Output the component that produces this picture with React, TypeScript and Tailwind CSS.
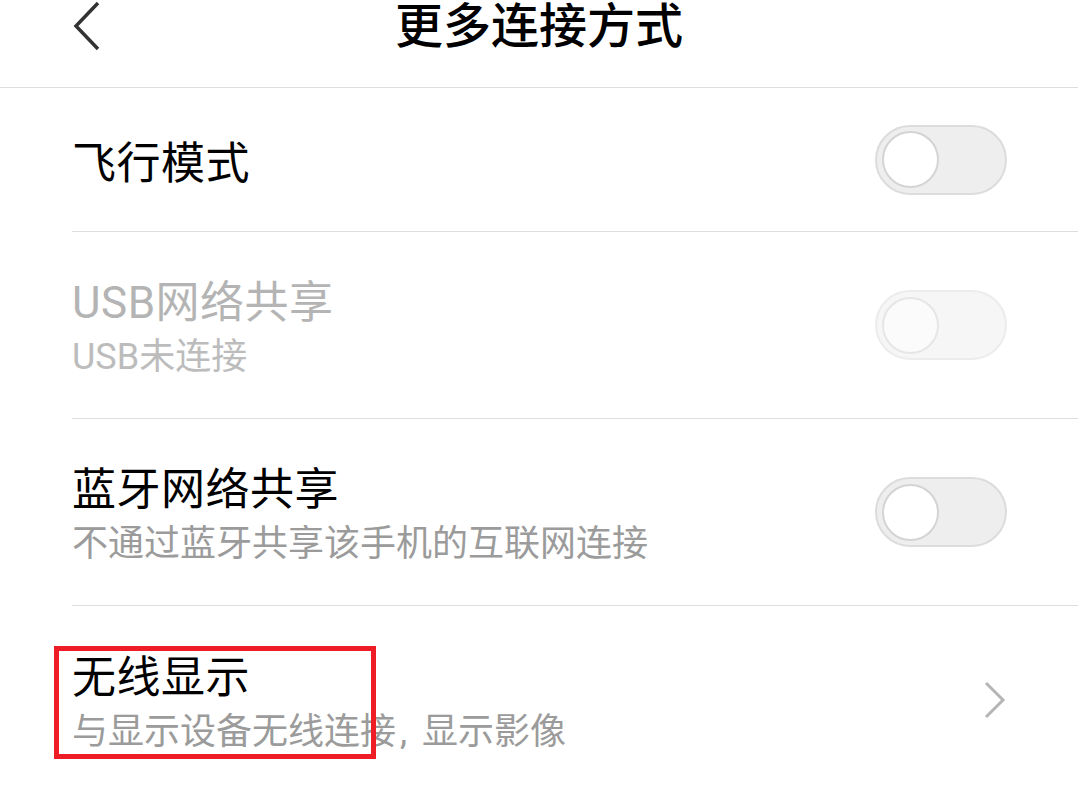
import React from 'react';

const FONT = { fontFamily: 'Roboto, "Noto Sans CJK SC", "Noto Sans", sans-serif' };

function Toggle({ disabled }: { disabled?: boolean }) {
  return (
    <div
      className={
        'flex h-[70px] w-[132px] items-center rounded-full border-2 px-[5px] ' +
        (disabled ? 'border-[#ececec] bg-[#f6f6f6]' : 'border-[#dcdcdc] bg-[#eeeeee]')
      }
    >
      <div
        className={
          'h-[57px] w-[57px] rounded-full border-2 ' +
          (disabled ? 'border-[#e6e6e6] bg-[#fbfbfb]' : 'border-[#d4d4d4] bg-white')
        }
      />
    </div>
  );
}

function Chevron() {
  return (
    <svg width="24" height="40" viewBox="0 0 24 40" fill="none">
      <path d="M3 3 L20 20 L3 37" stroke="#b5b5b5" strokeWidth="3" />
    </svg>
  );
}

interface RowProps {
  title: string;
  subtitle?: React.ReactNode;
  disabled?: boolean;
  right: React.ReactNode;
  last?: boolean;
  children?: React.ReactNode;
}

function Row({ title, subtitle, disabled, right, last, children }: RowProps) {
  return (
    <div className="relative pl-[72px]">
      <div
        className={
          'flex items-center justify-between pr-[71px] ' +
          (subtitle ? 'h-[187px] ' : 'h-[144px] ') +
          (last ? '' : 'border-b border-[#dedede]')
        }
      >
        <div className="flex flex-col pt-[8px]">
          <div
            className={
              'text-[44px] leading-[56px] tracking-[0.5px] ' +
              (disabled ? 'text-[#b4b4b4]' : 'text-black')
            }
          >
            {title}
          </div>
          {subtitle && (
            <div
              className={
                'text-[36px] leading-[52px] ' + (disabled ? 'text-[#bcbcbc]' : 'text-[#9b9b9b]')
              }
            >
              {subtitle}
            </div>
          )}
        </div>
        <div className="flex items-center">{right}</div>
      </div>
      {children}
    </div>
  );
}

export default function App() {
  return (
    <div className="h-[789px] w-[1078px] overflow-hidden bg-white" style={FONT}>
      {/* Header */}
      <div className="relative flex h-[88px] items-center justify-center border-b border-[#dedede]">
        <div className="absolute left-[72px] top-0">
          <svg width="30" height="52" viewBox="0 0 30 52" fill="none">
            <path d="M26 3 L4 26 L26 49" stroke="#333333" strokeWidth="3.5" />
          </svg>
        </div>
        <div className="-mt-[34px] text-[48px] font-medium leading-[56px] text-black">更多连接方式</div>
      </div>

      <Row title="飞行模式" right={<Toggle />} />
      <Row title="USB网络共享" subtitle="USB未连接" disabled right={<Toggle disabled />} />
      <Row title="蓝牙网络共享" subtitle="不通过蓝牙共享该手机的互联网连接" right={<Toggle />} />
      <Row
        title="无线显示"
        subtitle={
          <>
            与显示设备无线连接
            <span className="inline-block w-[26px] pl-[4px]">,</span>
            显示影像
          </>
        }
        right={
          <div className="pl-[4px]">
            <Chevron />
          </div>
        }
        last
      >
        <div className="pointer-events-none absolute left-[54px] top-[40px] h-[113px] w-[322px] border-[5px] border-[#ee1c25]" />
      </Row>
    </div>
  );
}
